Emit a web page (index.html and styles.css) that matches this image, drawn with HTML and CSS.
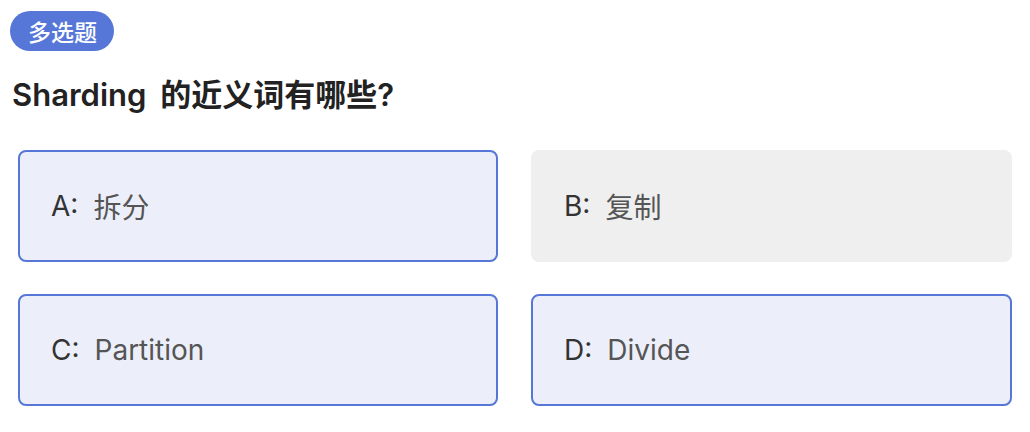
FILE: index.html
```html
<!DOCTYPE html>
<html lang="zh-CN">
<head>
<meta charset="utf-8">
<link rel="stylesheet" href="styles.css">
</head>
<body>
<div class="question">
  <div class="badge">多选题</div>
  <h1 class="title">Sharding 的近义词有哪些?</h1>
  <div class="options">
    <div class="option selected"><span class="key">A:</span><span class="val">拆分</span></div>
    <div class="option"><span class="key">B:</span><span class="val">复制</span></div>
    <div class="option selected"><span class="key">C:</span><span class="val">Partition</span></div>
    <div class="option selected"><span class="key">D:</span><span class="val">Divide</span></div>
  </div>
</div>
</body>
</html>
```
FILE: styles.css
```css
html, body {
  margin: 0;
  padding: 0;
  background: #ffffff;
}
body {
  font-family: Inter, "Noto Sans CJK SC", sans-serif;
}
.question {
  padding: 11px 18px 0 10px;
}
.badge {
  display: inline-flex;
  align-items: center;
  height: 40px;
  padding: 0 17px 0 18px;
  border-radius: 20px;
  background: #5677d8;
  color: #ffffff;
  font-size: 23px;
  font-weight: 500;
}
.title {
  margin: 23px 0 0 2px;
  font-size: 31px;
  line-height: 42px;
  font-weight: 600;
  color: #222222;
  word-spacing: 6px;
}
.options {
  margin: 34px 0 0 8px;
  display: grid;
  grid-template-columns: 480px 481px;
  column-gap: 33px;
  row-gap: 32px;
}
.option {
  box-sizing: border-box;
  height: 112px;
  display: flex;
  align-items: center;
  padding-left: 31px;
  border: 2px solid transparent;
  border-radius: 8px;
  background: #efefef;
  font-size: 28px;
}
.option.selected {
  border-color: #5677d8;
  background: #eceffa;
}
.key {
  color: #333333;
  margin-right: 15px;
}
.val {
  color: #555555;
}
```
